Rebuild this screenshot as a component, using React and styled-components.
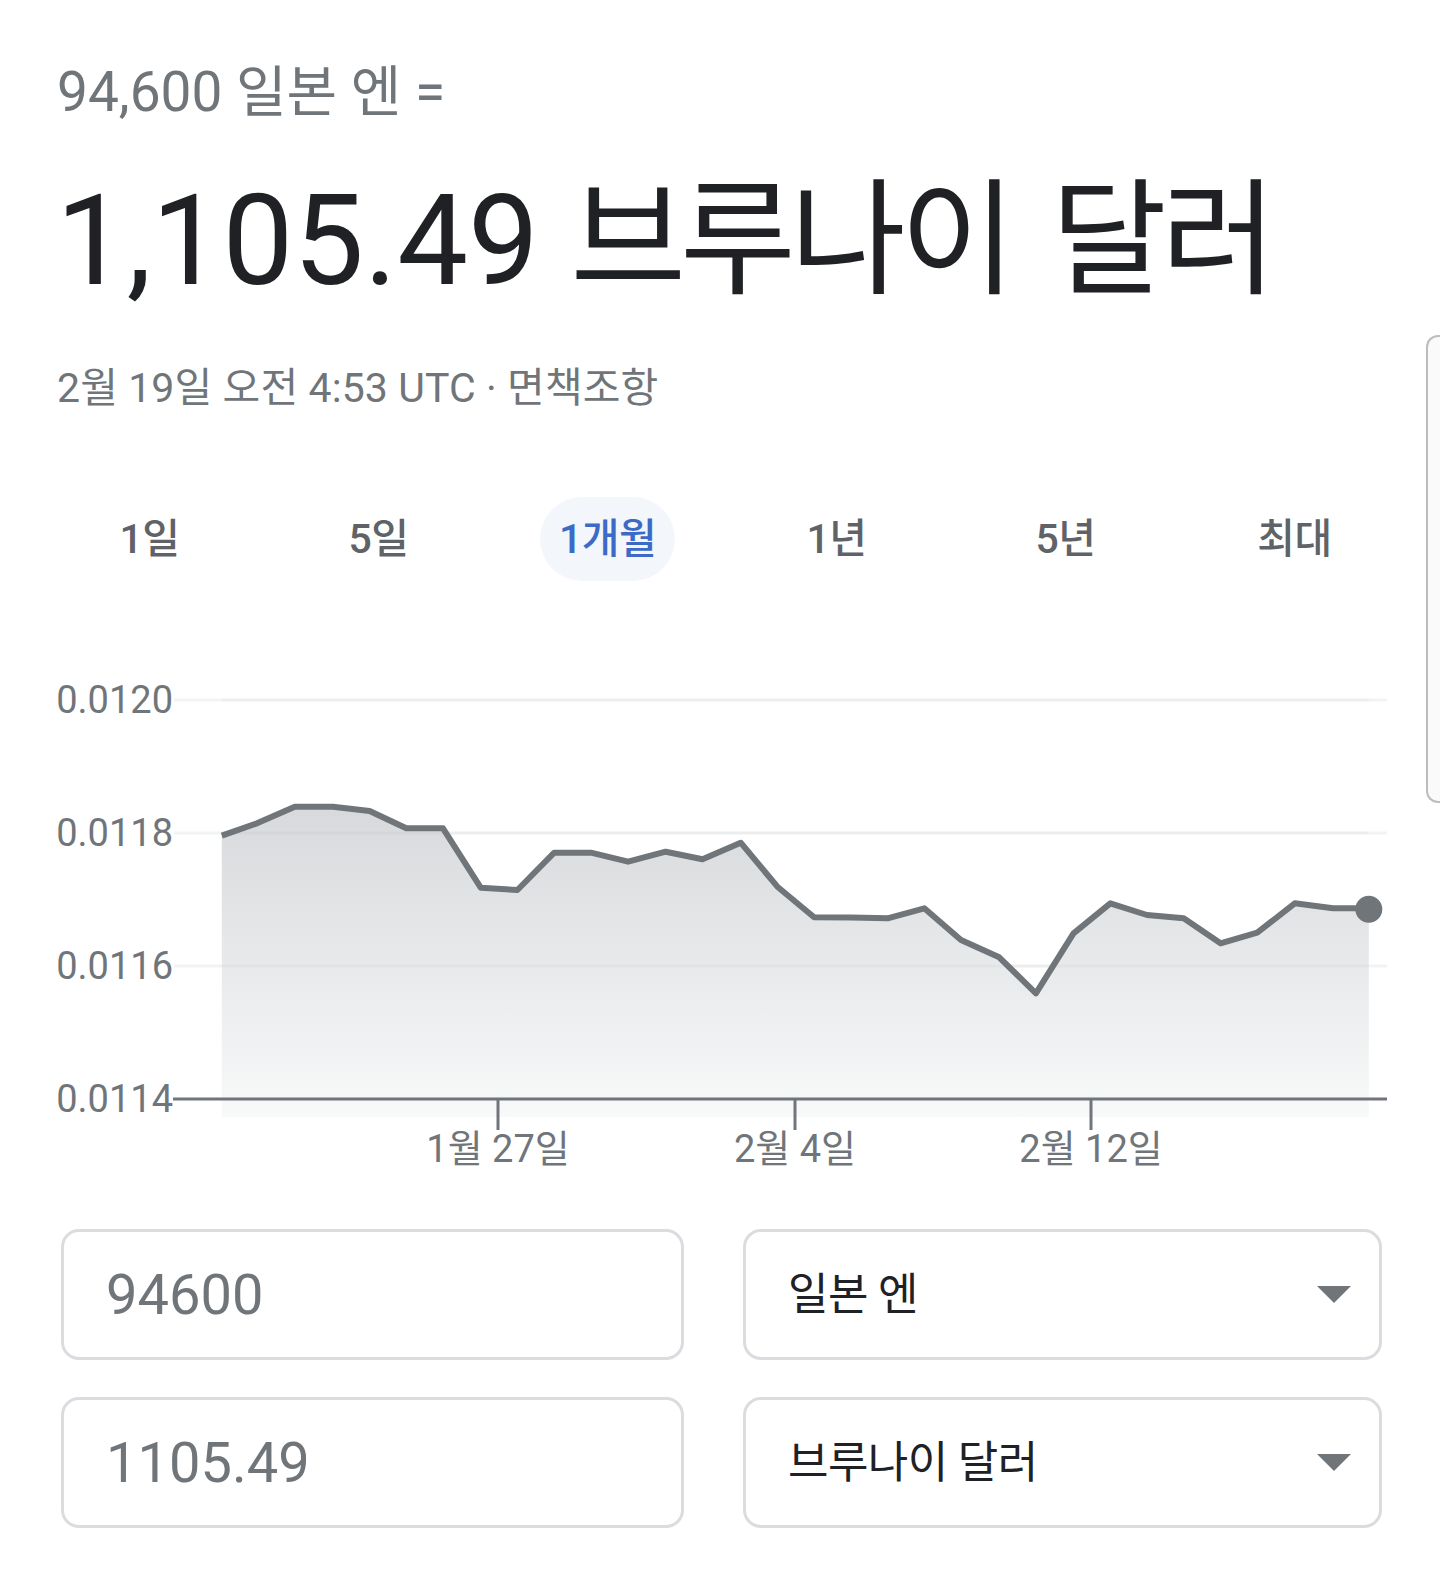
import React from 'react';
import styled, { createGlobalStyle } from 'styled-components';

const GlobalStyle = createGlobalStyle`
  html, body { margin: 0; padding: 0; background: #fff; }
  body { font-family: Roboto, "Noto Sans CJK KR", sans-serif; }
  * { box-sizing: border-box; }
`;

const FONT = 'Roboto, "Noto Sans CJK KR", sans-serif';

const Page = styled.div`
  position: relative;
  width: 1440px;
  min-height: 1578px;
  overflow: hidden;
  background: #fff;
  font-family: ${FONT};
`;

const Header = styled.header`
  padding: 60px 0 0 57px;
`;

const Equation = styled.div`
  font-size: 55px;
  line-height: 64px;
  color: #70757a;
  white-space: nowrap;
`;

const Result = styled.div`
  margin-top: 42px;
  margin-left: -1px;
  font-size: 126px;
  line-height: 150px;
  color: #202124;
  white-space: nowrap;
`;

const Hangul = styled.span`
  letter-spacing: -6px;
  word-spacing: 16px;
`;

const Timestamp = styled.div`
  margin-top: 48px;
  font-size: 41px;
  line-height: 48px;
  color: #70757a;
  white-space: nowrap;
  letter-spacing: 0.1px;
`;

const Disclaimer = styled.span`
  color: #70757a;
`;

const Tabs = styled.nav`
  display: flex;
  width: 1374px;
  height: 84px;
  margin: 85px 0 0 35px;
`;

const Tab = styled.div`
  flex: 1;
  display: flex;
  align-items: center;
  justify-content: center;
`;

const TabLabel = styled.span`
  display: inline-flex;
  align-items: center;
  justify-content: center;
  height: 84px;
  padding: 0 19px;
  border-radius: 42px;
  font-size: 41px;
  font-weight: 500;
  line-height: 84px;
  letter-spacing: -0.5px;
  color: ${(p) => (p.$active ? '#3c6ac6' : '#5f6368')};
  background: ${(p) => (p.$active ? '#f3f6fb' : 'transparent')};
`;

const ChartWrap = styled.div`
  margin-top: 79px;
  width: 1440px;
  height: 520px;
`;

const Converter = styled.div`
  display: grid;
  grid-template-columns: 623px 639px;
  column-gap: 59px;
  row-gap: 37px;
  margin-top: 49px;
  padding-left: 61px;
`;

const Field = styled.div`
  display: flex;
  align-items: center;
  justify-content: space-between;
  height: 131px;
  border: 3px solid #dadce0;
  border-radius: 18px;
  padding: ${(p) => (p.$select ? '0 28px 0 42px' : '0 40px 0 42px')};
  font-size: ${(p) => (p.$select ? '44px' : '56px')};
  letter-spacing: ${(p) => (p.$select ? '-0.6px' : '0')};
  line-height: 1;
  color: ${(p) => (p.$select ? '#202124' : '#70757a')};
  white-space: nowrap;
`;

const Caret = styled.span`
  width: 0;
  height: 0;
  border-left: 17.5px solid transparent;
  border-right: 17.5px solid transparent;
  border-top: 17px solid #70757a;
`;

const EdgeHandle = styled.div`
  position: absolute;
  left: 1426px;
  top: 335px;
  width: 30px;
  height: 468px;
  border: 2px solid #bdbdbd;
  border-right: none;
  border-radius: 12px 0 0 12px;
  background: #fafafa;
`;

const points = [
  [221.8, 175.7], [257, 163.3], [294.8, 146.7], [332.9, 146.7], [369.6, 151],
  [406.3, 168.3], [443, 168.3], [480.7, 227.7], [517.4, 230], [554.2, 192.7],
  [590.9, 192.7], [628.1, 201.7], [665.7, 191.7], [702.5, 199.3], [740.7, 182.7],
  [777.4, 226.7], [814.1, 257.3], [851, 257.5], [887.6, 258.3], [924.3, 248.3],
  [961, 280], [999.2, 297.3], [1035.9, 333.3], [1073.5, 273.3], [1110.3, 243.3],
  [1147, 255], [1183.7, 258.3], [1220.5, 283.3], [1257.2, 272.7], [1294.8, 243.3],
  [1333, 248.3], [1368.8, 248.3],
];

const grid = [
  { y: 40, label: '0.0120' },
  { y: 173, label: '0.0118' },
  { y: 306, label: '0.0116' },
];
const AXIS_Y = 439;
const ticks = [
  { x: 498, label: '1월 27일' },
  { x: 795, label: '2월 4일' },
  { x: 1091, label: '2월 12일' },
];

function Chart() {
  const line = points.map((p, i) => `${i ? 'L' : 'M'}${p[0]},${p[1]}`).join(' ');
  const first = points[0];
  const last = points[points.length - 1];
  const area = `${line} L${last[0]},457 L${first[0]},457 Z`;
  return (
    <svg width="1440" height="520" viewBox="0 0 1440 520" style={{ display: 'block' }}>
      <defs>
        <linearGradient id="areaFill" x1="0" y1="146" x2="0" y2="457" gradientUnits="userSpaceOnUse">
          <stop offset="0" stopColor="#d7d9dc" />
          <stop offset="1" stopColor="#f8f9f9" />
        </linearGradient>
      </defs>
      {grid.map((g) => (
        <line key={g.y} x1="174" x2="1387" y1={g.y} y2={g.y} stroke="#f1f3f4" strokeWidth="3" />
      ))}
      <path d={area} fill="url(#areaFill)" />
      {grid.map((g) => (
        <line key={'o' + g.y} x1={first[0]} x2={last[0]} y1={g.y} y2={g.y} stroke="#000" strokeOpacity="0.025" strokeWidth="3" />
      ))}
      {[...grid, { y: AXIS_Y, label: '0.0114' }].map((g) => (
        <text key={g.label} x="173" y={g.y + 13} textAnchor="end" fontFamily={FONT} fontSize="38" fill="#70757a">
          {g.label}
        </text>
      ))}
      <line x1="173" x2="1387" y1={AXIS_Y} y2={AXIS_Y} stroke="#70757a" strokeWidth="3" />
      {ticks.map((t) => (
        <g key={t.label}>
          <line x1={t.x} x2={t.x} y1={AXIS_Y} y2="470" stroke="#70757a" strokeWidth="3" />
          <text x={t.x} y="502" textAnchor="middle" fontFamily={FONT} fontSize="38" fill="#70757a">
            {t.label}
          </text>
        </g>
      ))}
      <path d={line} fill="none" stroke="#70757a" strokeWidth="6" strokeLinejoin="round" />
      <circle cx={last[0]} cy={last[1] + 1} r="13.5" fill="#70757a" />
    </svg>
  );
}

const tabs = ['1일', '5일', '1개월', '1년', '5년', '최대'];

export default function App() {
  return (
    <Page>
      <GlobalStyle />
      <Header>
        <Equation>94,600 일본 엔 =</Equation>
        <Result>
          1,105.49 <Hangul>브루나이 달러</Hangul>
        </Result>
        <Timestamp>
          2월 19일 오전 4:53 UTC · <Disclaimer>면책조항</Disclaimer>
        </Timestamp>
      </Header>
      <Tabs>
        {tabs.map((t) => (
          <Tab key={t}>
            <TabLabel $active={t === '1개월'}>{t}</TabLabel>
          </Tab>
        ))}
      </Tabs>
      <ChartWrap>
        <Chart />
      </ChartWrap>
      <Converter>
        <Field>94600</Field>
        <Field $select>
          일본 엔
          <Caret />
        </Field>
        <Field>1105.49</Field>
        <Field $select>
          브루나이 달러
          <Caret />
        </Field>
      </Converter>
      <EdgeHandle />
    </Page>
  );
}
